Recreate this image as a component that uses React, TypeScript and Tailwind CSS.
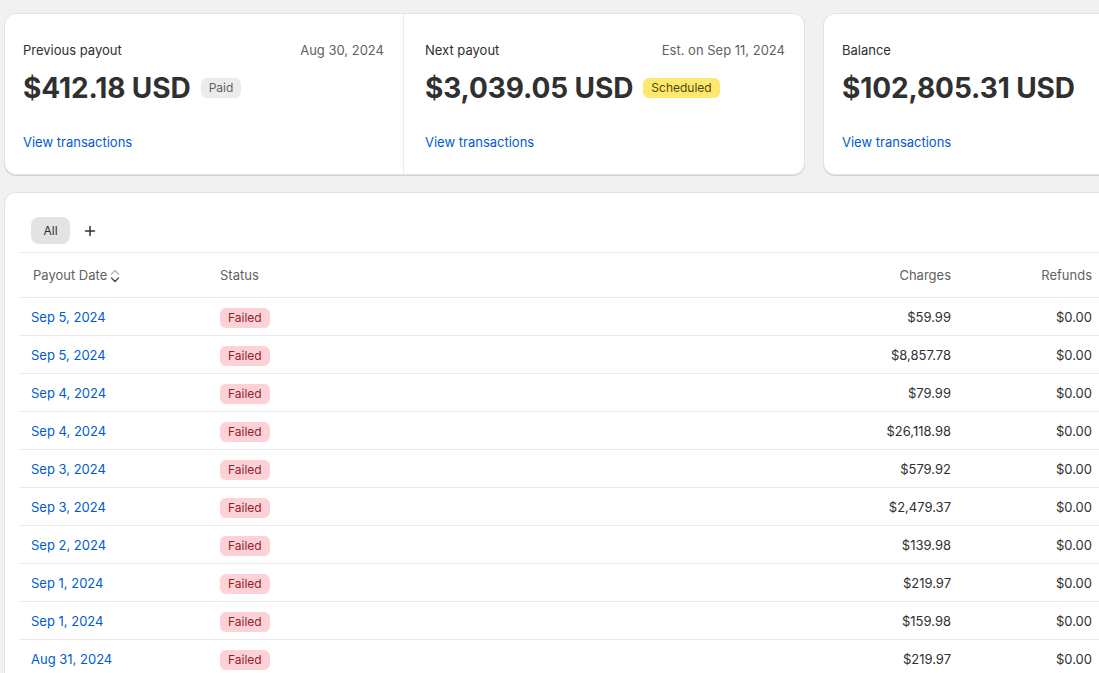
import React from "react";

const rows: [string, string][] = [
  ["Sep 5, 2024", "$59.99"],
  ["Sep 5, 2024", "$8,857.78"],
  ["Sep 4, 2024", "$79.99"],
  ["Sep 4, 2024", "$26,118.98"],
  ["Sep 3, 2024", "$579.92"],
  ["Sep 3, 2024", "$2,479.37"],
  ["Sep 2, 2024", "$139.98"],
  ["Sep 1, 2024", "$219.97"],
  ["Sep 1, 2024", "$159.98"],
  ["Aug 31, 2024", "$219.97"],
];

function SortIcon() {
  return (
    <svg width="10" height="16" viewBox="0 0 10 16" className="ml-[3px]">
      <path d="M1.5 6 L5 2.5 L8.5 6" fill="none" stroke="#b5b5b5" strokeWidth="1.4" strokeLinecap="round" strokeLinejoin="round" />
      <path d="M1.5 10 L5 13.5 L8.5 10" fill="none" stroke="#4a4a4a" strokeWidth="1.4" strokeLinecap="round" strokeLinejoin="round" />
    </svg>
  );
}

function Panel({
  label,
  right,
  amount,
  badge,
  className,
}: {
  label: string;
  right?: string;
  amount: string;
  badge?: React.ReactNode;
  className?: string;
}) {
  return (
    <div className={"flex flex-col pt-[26px] pb-[22px] " + (className ?? "")}>
      <div className="flex items-center justify-between text-[13px] leading-5 text-[#303030]">
        <span>{label}</span>
        {right && <span className="text-[#616161]">{right}</span>}
      </div>
      <div className="mt-[10px] flex h-9 items-center gap-[10px]">
        <span className="text-[28px] font-bold leading-9 tracking-[-0.1px] text-[#303030]">{amount}</span>
        {badge}
      </div>
      <div className="mt-[26px] text-[13px] leading-5 text-[#005bd3]">View transactions</div>
    </div>
  );
}

export default function App() {
  return (
    <div
      className="h-[673px] w-[1099px] overflow-hidden bg-[#f1f1f1]"
      style={{ fontFamily: "Inter, 'Noto Sans', sans-serif" }}
    >
      <div className="w-[1400px] pl-[4px] pt-[13px]">
        <div className="flex gap-[18px]">
          <div className="flex w-[801px] rounded-xl border border-[#e3e3e3] bg-white shadow-[0_1px_0_rgba(0,0,0,0.12)]">
            <Panel
              className="w-[399px] border-r border-[#ebebeb] pl-[18px] pr-[19px]"
              label="Previous payout"
              right="Aug 30, 2024"
              amount="$412.18 USD"
              badge={
                <span className="rounded-md bg-[#ebebeb] px-2 text-[12px] leading-5 text-[#616161]">Paid</span>
              }
            />
            <Panel
              className="flex-1 pl-[21px] pr-[19px]"
              label="Next payout"
              right="Est. on Sep 11, 2024"
              amount="$3,039.05 USD"
              badge={
                <span className="rounded-md bg-[#ffe870] px-2 text-[12px] leading-5 text-[#4f4700]">Scheduled</span>
              }
            />
          </div>
          <div className="w-[400px] rounded-xl border border-[#e3e3e3] bg-white shadow-[0_1px_0_rgba(0,0,0,0.12)]">
            <Panel className="pl-[18px] pr-5" label="Balance" amount="$102,805.31 USD" />
          </div>
        </div>

        <div className="mt-[17px] w-[1300px] rounded-t-xl border border-[#e3e3e3] bg-white px-[14px] pt-[24px] shadow-[0_1px_0_rgba(0,0,0,0.12)]">
          <div className="flex items-center gap-[11px] px-[12px] pb-[8px]">
            <span className="flex h-[27px] w-[39px] items-center justify-center rounded-lg bg-[#e3e3e3] text-[12px] font-normal text-[#303030]">
              All
            </span>
            <span className="flex h-[27px] w-[18px] items-center justify-center">
              <svg width="12" height="12" viewBox="0 0 12 12">
                <path d="M6 1.5 V10.5 M1.5 6 H10.5" stroke="#303030" strokeWidth="1.5" strokeLinecap="round" />
              </svg>
            </span>
          </div>
          <table className="w-[1270px] table-fixed border-collapse text-[13px] text-[#303030]">
            <colgroup>
              <col className="w-[189px]" />
              <col className="w-[592px]" />
              <col className="w-[163px]" />
              <col className="w-[141px]" />
              <col />
            </colgroup>
            <thead>
              <tr className="h-[45px] border-y border-[#ebebeb] text-[#616161]">
                <th className="pl-[14px] pt-[2px] text-left font-normal">
                  <span className="inline-flex items-center">
                    Payout Date
                    <SortIcon />
                  </span>
                </th>
                <th className="pl-[12px] pt-[2px] text-left font-normal">Status</th>
                <th className="pr-[12px] pt-[2px] text-right font-normal">Charges</th>
                <th className="pr-[12px] pt-[2px] text-right font-normal">Refunds</th>
                <th className="pr-[12px] pt-[2px] text-right font-normal">Fees</th>
              </tr>
            </thead>
            <tbody>
              {rows.map(([d, c], i) => (
                <tr key={i} className="h-[38px] border-b border-[#ebebeb]">
                  <td className="pl-[12px] pt-[2px] text-[#005bd3]">{d}</td>
                  <td className="pl-[12px] pt-[2px]">
                    <span className="inline-block rounded-md bg-[#fed1d7] px-2 text-[12px] leading-5 text-[#8e1f2b]">
                      Failed
                    </span>
                  </td>
                  <td className="pr-[12px] pt-[2px] text-right">{c}</td>
                  <td className="pr-[12px] pt-[2px] text-right">$0.00</td>
                  <td className="pr-[12px] pt-[2px] text-right">$0.00</td>
                </tr>
              ))}
            </tbody>
          </table>
        </div>
      </div>
    </div>
  );
}
